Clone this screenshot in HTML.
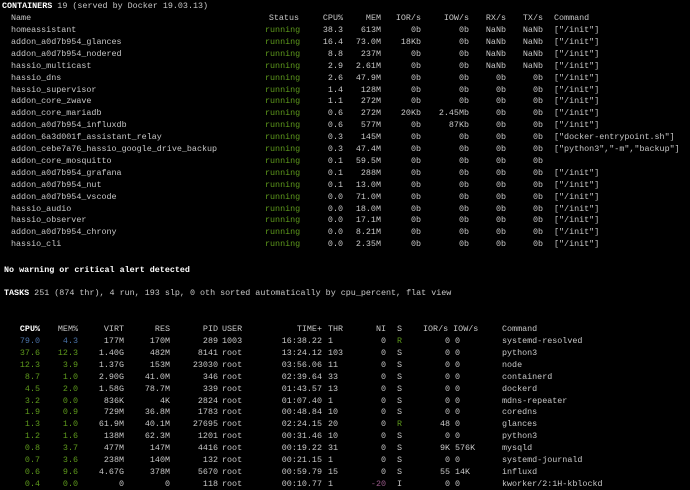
<!DOCTYPE html>
<html><head><meta charset="utf-8"><style>
html,body{margin:0;padding:0;background:#000;width:690px;height:490px;overflow:hidden}
body{font-family:"Liberation Mono",monospace;font-size:8.4px;color:#c8c8c8;position:relative}
.r{position:absolute;left:0;width:690px;height:12px;line-height:12px}
.r span{position:absolute;white-space:pre;top:0}
.g{color:#5e9a1c}.w{color:#fff;font-weight:bold}.bl{color:#4a72a8}.pu{color:#9a5a8a}
.n{left:11px}.st{left:265px}.c{right:347px}.m{right:309px}.ir{right:269px}.iw{right:221px}.rx{right:184px}.tx{right:147px}.cm{left:554px}
.a{right:650px}.b{right:612px}.v{right:566px}.rs{right:520px}.p{right:472px}.u{left:222px}.t{right:368px}.th{left:328px}.ni{right:304px}.s{left:397px}.ior{right:240px}.iow{left:455px}.cmd{left:502px}
</style></head><body>
<div class="r" style="top:0px"><span style="left:2px"><b style="color:#fff">CONTAINERS</b> 19 (served by Docker 19.03.13)</span></div>
<div class="r" style="top:12px"><span class="n">Name</span><span style="right:391px">Status</span><span class="c">CPU%</span><span class="m">MEM</span><span class="ir">IOR/s</span><span class="iw">IOW/s</span><span class="rx">RX/s</span><span class="tx">TX/s</span><span class="cm">Command</span></div>
<div class="r" style="top:24px"><span class="n">homeassistant</span><span class="st g">running</span><span class="c">38.3</span><span class="m">613M</span><span class="ir">0b</span><span class="iw">0b</span><span class="rx">NaNb</span><span class="tx">NaNb</span><span class="cm">["/init"]</span></div>
<div class="r" style="top:35.9px"><span class="n">addon_a0d7b954_glances</span><span class="st g">running</span><span class="c">16.4</span><span class="m">73.0M</span><span class="ir">18Kb</span><span class="iw">0b</span><span class="rx">NaNb</span><span class="tx">NaNb</span><span class="cm">["/init"]</span></div>
<div class="r" style="top:47.8px"><span class="n">addon_a0d7b954_nodered</span><span class="st g">running</span><span class="c">8.8</span><span class="m">237M</span><span class="ir">0b</span><span class="iw">0b</span><span class="rx">NaNb</span><span class="tx">NaNb</span><span class="cm">["/init"]</span></div>
<div class="r" style="top:59.7px"><span class="n">hassio_multicast</span><span class="st g">running</span><span class="c">2.9</span><span class="m">2.61M</span><span class="ir">0b</span><span class="iw">0b</span><span class="rx">NaNb</span><span class="tx">NaNb</span><span class="cm">["/init"]</span></div>
<div class="r" style="top:71.6px"><span class="n">hassio_dns</span><span class="st g">running</span><span class="c">2.6</span><span class="m">47.9M</span><span class="ir">0b</span><span class="iw">0b</span><span class="rx">0b</span><span class="tx">0b</span><span class="cm">["/init"]</span></div>
<div class="r" style="top:83.5px"><span class="n">hassio_supervisor</span><span class="st g">running</span><span class="c">1.4</span><span class="m">128M</span><span class="ir">0b</span><span class="iw">0b</span><span class="rx">0b</span><span class="tx">0b</span><span class="cm">["/init"]</span></div>
<div class="r" style="top:95.4px"><span class="n">addon_core_zwave</span><span class="st g">running</span><span class="c">1.1</span><span class="m">272M</span><span class="ir">0b</span><span class="iw">0b</span><span class="rx">0b</span><span class="tx">0b</span><span class="cm">["/init"]</span></div>
<div class="r" style="top:107.3px"><span class="n">addon_core_mariadb</span><span class="st g">running</span><span class="c">0.6</span><span class="m">272M</span><span class="ir">20Kb</span><span class="iw">2.45Mb</span><span class="rx">0b</span><span class="tx">0b</span><span class="cm">["/init"]</span></div>
<div class="r" style="top:119.2px"><span class="n">addon_a0d7b954_influxdb</span><span class="st g">running</span><span class="c">0.6</span><span class="m">577M</span><span class="ir">0b</span><span class="iw">87Kb</span><span class="rx">0b</span><span class="tx">0b</span><span class="cm">["/init"]</span></div>
<div class="r" style="top:131.1px"><span class="n">addon_6a3d001f_assistant_relay</span><span class="st g">running</span><span class="c">0.3</span><span class="m">145M</span><span class="ir">0b</span><span class="iw">0b</span><span class="rx">0b</span><span class="tx">0b</span><span class="cm">["docker-entrypoint.sh"]</span></div>
<div class="r" style="top:143px"><span class="n">addon_cebe7a76_hassio_google_drive_backup</span><span class="st g">running</span><span class="c">0.3</span><span class="m">47.4M</span><span class="ir">0b</span><span class="iw">0b</span><span class="rx">0b</span><span class="tx">0b</span><span class="cm">["python3","-m","backup"]</span></div>
<div class="r" style="top:154.9px"><span class="n">addon_core_mosquitto</span><span class="st g">running</span><span class="c">0.1</span><span class="m">59.5M</span><span class="ir">0b</span><span class="iw">0b</span><span class="rx">0b</span><span class="tx">0b</span></div>
<div class="r" style="top:166.8px"><span class="n">addon_a0d7b954_grafana</span><span class="st g">running</span><span class="c">0.1</span><span class="m">288M</span><span class="ir">0b</span><span class="iw">0b</span><span class="rx">0b</span><span class="tx">0b</span><span class="cm">["/init"]</span></div>
<div class="r" style="top:178.7px"><span class="n">addon_a0d7b954_nut</span><span class="st g">running</span><span class="c">0.1</span><span class="m">13.0M</span><span class="ir">0b</span><span class="iw">0b</span><span class="rx">0b</span><span class="tx">0b</span><span class="cm">["/init"]</span></div>
<div class="r" style="top:190.6px"><span class="n">addon_a0d7b954_vscode</span><span class="st g">running</span><span class="c">0.0</span><span class="m">71.0M</span><span class="ir">0b</span><span class="iw">0b</span><span class="rx">0b</span><span class="tx">0b</span><span class="cm">["/init"]</span></div>
<div class="r" style="top:202.5px"><span class="n">hassio_audio</span><span class="st g">running</span><span class="c">0.0</span><span class="m">18.0M</span><span class="ir">0b</span><span class="iw">0b</span><span class="rx">0b</span><span class="tx">0b</span><span class="cm">["/init"]</span></div>
<div class="r" style="top:214.4px"><span class="n">hassio_observer</span><span class="st g">running</span><span class="c">0.0</span><span class="m">17.1M</span><span class="ir">0b</span><span class="iw">0b</span><span class="rx">0b</span><span class="tx">0b</span><span class="cm">["/init"]</span></div>
<div class="r" style="top:226.3px"><span class="n">addon_a0d7b954_chrony</span><span class="st g">running</span><span class="c">0.0</span><span class="m">8.21M</span><span class="ir">0b</span><span class="iw">0b</span><span class="rx">0b</span><span class="tx">0b</span><span class="cm">["/init"]</span></div>
<div class="r" style="top:238.2px"><span class="n">hassio_cli</span><span class="st g">running</span><span class="c">0.0</span><span class="m">2.35M</span><span class="ir">0b</span><span class="iw">0b</span><span class="rx">0b</span><span class="tx">0b</span><span class="cm">["/init"]</span></div>

<div class="r" style="top:264px"><span class="w" style="left:4px">No warning or critical alert detected</span></div>
<div class="r" style="top:287px"><span style="left:4px"><b style="color:#fff">TASKS</b> 251 (874 thr), 4 run, 193 slp, 0 oth sorted automatically by cpu_percent, flat view</span></div>

<div class="r" style="top:323px"><span class="a w">CPU%</span><span class="b">MEM%</span><span class="v">VIRT</span><span class="rs">RES</span><span class="p">PID</span><span class="u">USER</span><span class="t">TIME+</span><span class="th">THR</span><span class="ni">NI</span><span class="s">S</span><span style="left:423px">IOR/s IOW/s</span><span class="cmd">Command</span></div>
<div class="r" style="top:335px"><span class="a bl">79.0</span><span class="b bl">4.3</span><span class="v">177M</span><span class="rs">170M</span><span class="p">289</span><span class="u">1003</span><span class="t">16:38.22</span><span class="th">1</span><span class="ni">0</span><span class="s g">R</span><span class="ior">0</span><span class="iow">0</span><span class="cmd">systemd-resolved</span></div>
<div class="r" style="top:346.9px"><span class="a g">37.6</span><span class="b g">12.3</span><span class="v">1.40G</span><span class="rs">482M</span><span class="p">8141</span><span class="u">root</span><span class="t">13:24.12</span><span class="th">103</span><span class="ni">0</span><span class="s">S</span><span class="ior">0</span><span class="iow">0</span><span class="cmd">python3</span></div>
<div class="r" style="top:358.8px"><span class="a g">12.3</span><span class="b g">3.9</span><span class="v">1.37G</span><span class="rs">153M</span><span class="p">23030</span><span class="u">root</span><span class="t">03:56.06</span><span class="th">11</span><span class="ni">0</span><span class="s">S</span><span class="ior">0</span><span class="iow">0</span><span class="cmd">node</span></div>
<div class="r" style="top:370.7px"><span class="a g">8.7</span><span class="b g">1.0</span><span class="v">2.90G</span><span class="rs">41.0M</span><span class="p">346</span><span class="u">root</span><span class="t">02:39.64</span><span class="th">33</span><span class="ni">0</span><span class="s">S</span><span class="ior">0</span><span class="iow">0</span><span class="cmd">containerd</span></div>
<div class="r" style="top:382.6px"><span class="a g">4.5</span><span class="b g">2.0</span><span class="v">1.58G</span><span class="rs">78.7M</span><span class="p">339</span><span class="u">root</span><span class="t">01:43.57</span><span class="th">13</span><span class="ni">0</span><span class="s">S</span><span class="ior">0</span><span class="iow">0</span><span class="cmd">dockerd</span></div>
<div class="r" style="top:394.5px"><span class="a g">3.2</span><span class="b g">0.0</span><span class="v">836K</span><span class="rs">4K</span><span class="p">2824</span><span class="u">root</span><span class="t">01:07.40</span><span class="th">1</span><span class="ni">0</span><span class="s">S</span><span class="ior">0</span><span class="iow">0</span><span class="cmd">mdns-repeater</span></div>
<div class="r" style="top:406.4px"><span class="a g">1.9</span><span class="b g">0.9</span><span class="v">729M</span><span class="rs">36.8M</span><span class="p">1783</span><span class="u">root</span><span class="t">00:48.84</span><span class="th">10</span><span class="ni">0</span><span class="s">S</span><span class="ior">0</span><span class="iow">0</span><span class="cmd">coredns</span></div>
<div class="r" style="top:418.3px"><span class="a g">1.3</span><span class="b g">1.0</span><span class="v">61.9M</span><span class="rs">40.1M</span><span class="p">27695</span><span class="u">root</span><span class="t">02:24.15</span><span class="th">20</span><span class="ni">0</span><span class="s g">R</span><span class="ior">48</span><span class="iow">0</span><span class="cmd">glances</span></div>
<div class="r" style="top:430.2px"><span class="a g">1.2</span><span class="b g">1.6</span><span class="v">138M</span><span class="rs">62.3M</span><span class="p">1201</span><span class="u">root</span><span class="t">00:31.46</span><span class="th">10</span><span class="ni">0</span><span class="s">S</span><span class="ior">0</span><span class="iow">0</span><span class="cmd">python3</span></div>
<div class="r" style="top:442.1px"><span class="a g">0.8</span><span class="b g">3.7</span><span class="v">477M</span><span class="rs">147M</span><span class="p">4416</span><span class="u">root</span><span class="t">00:19.22</span><span class="th">31</span><span class="ni">0</span><span class="s">S</span><span class="ior">9K</span><span class="iow">576K</span><span class="cmd">mysqld</span></div>
<div class="r" style="top:454px"><span class="a g">0.7</span><span class="b g">3.6</span><span class="v">238M</span><span class="rs">140M</span><span class="p">132</span><span class="u">root</span><span class="t">00:21.15</span><span class="th">1</span><span class="ni">0</span><span class="s">S</span><span class="ior">0</span><span class="iow">0</span><span class="cmd">systemd-journald</span></div>
<div class="r" style="top:465.9px"><span class="a g">0.6</span><span class="b g">9.6</span><span class="v">4.67G</span><span class="rs">378M</span><span class="p">5670</span><span class="u">root</span><span class="t">00:59.79</span><span class="th">15</span><span class="ni">0</span><span class="s">S</span><span class="ior">55</span><span class="iow">14K</span><span class="cmd">influxd</span></div>
<div class="r" style="top:477.8px"><span class="a g">0.4</span><span class="b g">0.0</span><span class="v">0</span><span class="rs">0</span><span class="p">118</span><span class="u">root</span><span class="t">00:10.77</span><span class="th">1</span><span class="ni pu">-20</span><span class="s">I</span><span class="ior">0</span><span class="iow">0</span><span class="cmd">kworker/2:1H-kblockd</span></div>
</body></html>
